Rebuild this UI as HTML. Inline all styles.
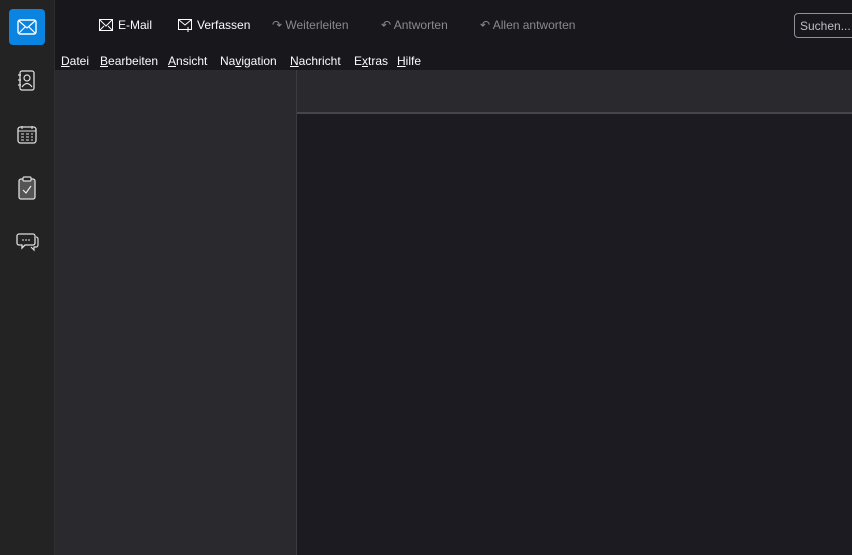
<!DOCTYPE html>
<html><head><meta charset="utf-8"><style>
*{margin:0;padding:0;box-sizing:border-box}
body{width:852px;height:555px;overflow:hidden;background:#1c1b22;font-family:"Liberation Sans",sans-serif;font-size:12.5px;position:relative}
#side{position:absolute;left:0;top:0;width:55px;height:555px;background:#232323;border-right:1px solid #2e2e32}
#top{position:absolute;left:55px;top:0;right:0;height:70px;background:#18171c}
#folders{position:absolute;left:55px;top:70px;width:242px;bottom:0;background:#2a2a2e;border-right:1px solid #3c3c40}
#hdr{position:absolute;left:297px;top:70px;right:0;height:44px;background:#2a2a2e;border-bottom:2px solid #46464a}
.tb{position:absolute;top:18px;color:#fbfbfe;display:flex;align-items:center;gap:5px;font-size:12px}
.tb.dis{color:#8a8a8e}
.menu{position:absolute;top:54px;color:#fbfbfe;font-size:12px}
.menu span{position:absolute;white-space:nowrap}
u{text-decoration:underline}
#search{position:absolute;left:794px;top:13px;width:70px;height:25px;border:1px solid #8f8f9d;border-radius:4px;color:#bdbdc4;padding:5px 5px;background:#18171c;font-size:12px}
.ic{position:absolute;left:16px}
</style></head><body>
<div id="side">
 <div style="position:absolute;left:9px;top:9px;width:36px;height:36px;background:#0a84e0;border-radius:4px"></div>
 <svg style="position:absolute;left:16px;top:17px" width="22" height="20" viewBox="0 0 22 20"><rect x="2" y="3" width="18" height="14" rx="2" fill="none" stroke="#fff" stroke-width="1.4"/><path d="M3 4 L11 11 L19 4 M3 16 L9 10 M19 16 L13 10" fill="none" stroke="#fff" stroke-width="1.2"/></svg>
 <svg class="ic" style="top:69px" width="22" height="24" viewBox="0 0 22 24"><rect x="4" y="2" width="14" height="19" rx="2" fill="none" stroke="#ddd" stroke-width="1.3"/><circle cx="11" cy="9" r="3" fill="none" stroke="#ddd" stroke-width="1.2"/><path d="M6 18 Q11 11 16 18M2 6h3M2 11h3M2 16h3" fill="none" stroke="#ddd" stroke-width="1.2"/></svg>
 <svg class="ic" style="top:124px" width="22" height="22" viewBox="0 0 22 22"><rect x="2" y="3" width="18" height="16" rx="2.5" fill="none" stroke="#ddd" stroke-width="1.3"/><path d="M2 7h18M6 2v3M16 2v3M5 10h3M10 10h3M15 10h2M5 13h3M10 13h3M15 13h2M5 16h3M10 16h3M15 16h2" stroke="#ddd" stroke-width="1.1"/></svg>
 <svg class="ic" style="top:176px" width="22" height="24" viewBox="0 0 22 24"><rect x="3" y="3" width="16" height="20" rx="2" fill="#555" stroke="#ddd" stroke-width="1.3"/><rect x="7" y="1" width="8" height="4" rx="1" fill="#232323" stroke="#ddd" stroke-width="1.2"/><path d="M7 14 L10 17 L15 10" fill="none" stroke="#eee" stroke-width="1.2"/></svg>
 <svg class="ic" style="top:231px" width="24" height="22" viewBox="0 0 24 22"><path d="M3 3h14a2 2 0 0 1 2 2v7a2 2 0 0 1-2 2H9l-3 3v-3H3a2 2 0 0 1-2-2V5a2 2 0 0 1 2-2z" fill="none" stroke="#ddd" stroke-width="1.3"/><path d="M20 6a2 2 0 0 1 2 2v6a2 2 0 0 1-2 2h-2v3l-3-3" fill="none" stroke="#ddd" stroke-width="1.2"/><path d="M6 9h2M9 9h2M12 9h2" stroke="#ddd"/></svg>
</div>
<div id="top">
 <div class="tb" style="left:44px"><svg width="14" height="12"><rect x="0.5" y="0.5" width="13" height="11" fill="none" stroke="#fff"/><path d="M1 1l6 6 6-6M1 11l4-4M13 11l-4-4" fill="none" stroke="#fff"/></svg>E-Mail</div>
 <div class="tb" style="left:123px"><svg width="14" height="13"><rect x="0.5" y="0.5" width="13" height="10" fill="none" stroke="#fff"/><path d="M1 1l6 5 6-5M10 8v5M8 10.5h5" fill="none" stroke="#fff"/></svg>Verfassen</div>
 <div class="tb dis" style="left:217px">&#x21B7; Weiterleiten</div>
 <div class="tb dis" style="left:326px">&#x21B6; Antworten</div>
 <div class="tb dis" style="left:425px">&#x21B6; Allen antworten</div>
</div>
<div class="menu">
 <span style="left:61px"><u>D</u>atei</span>
 <span style="left:100px"><u>B</u>earbeiten</span>
 <span style="left:168px"><u>A</u>nsicht</span>
 <span style="left:220px">Na<u>v</u>igation</span>
 <span style="left:290px"><u>N</u>achricht</span>
 <span style="left:354px">E<u>x</u>tras</span>
 <span style="left:397px"><u>H</u>ilfe</span>
</div>
<div id="search">Suchen...</div>
<div id="folders"></div>
<div id="hdr"></div>
</body></html>
